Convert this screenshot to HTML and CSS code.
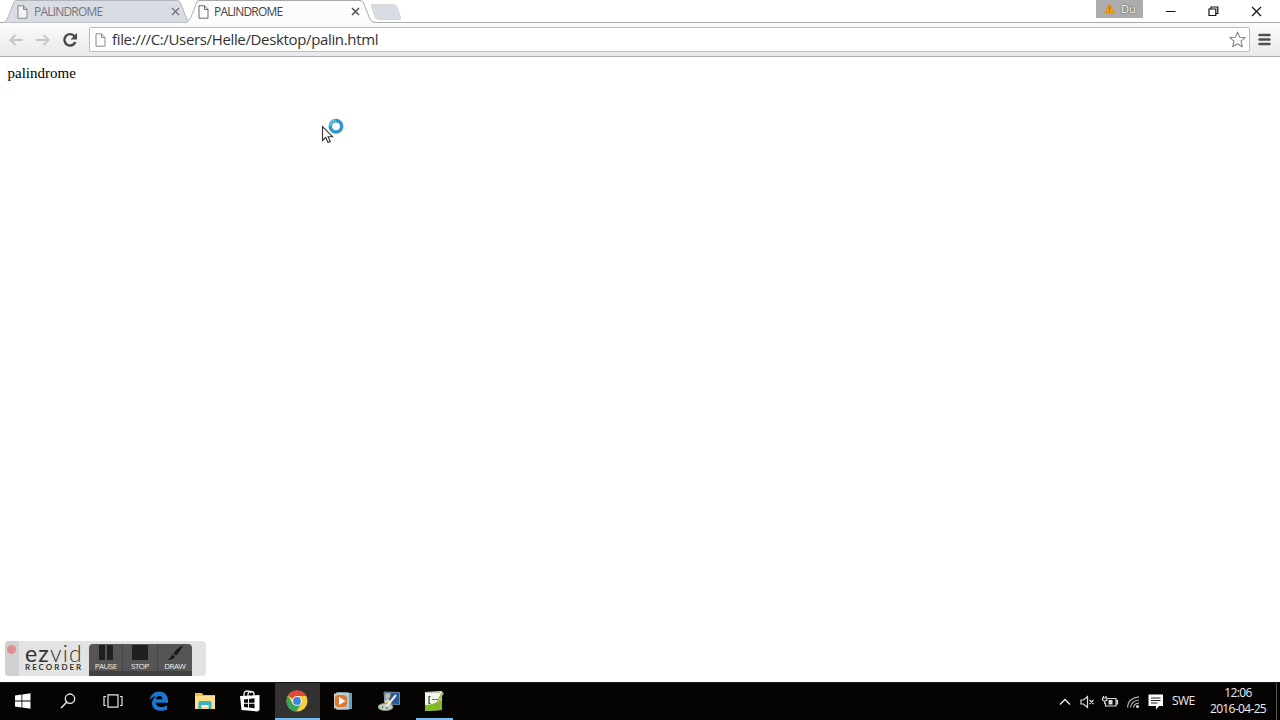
FILE: index.html
```html
<!DOCTYPE html>
<html lang="en">
<head>
    <meta charset="UTF-8">
    <meta name="viewport" content="width=device-width, initial-scale=1.0">
    <link rel="stylesheet" href="styles.css">
    <title>PALINDROME</title>
</head>
<body>
    <div class="desktop">
        <header class="tab-strip">
            <div class="tab">
                <svg class="tab-shape" width="192" height="24" viewBox="0 0 192 24">
                    <path d="M3 22.5 C7 22 8 17 14 1.5 Q15 .5 17 .5 H177 Q179 .5 180 2 L187 19 Q189 22.5 192 22.5" fill="#d9dce3" stroke="#b3b5ba"/>
                </svg>
                <svg class="page-icon" width="11" height="14" viewBox="0 0 11 14"><path d="M1 .8H6.5L10 4.5V13.2H1ZM6.5 .8V4.5H10" fill="#f4f4f6" stroke="#85878d"/></svg>
                <span class="tab-title">PALINDROME</span>
                <svg class="tab-close" width="9" height="9" viewBox="0 0 9 9"><path d="M1 1L8 8M8 1L1 8" stroke="#77797e" stroke-width="1.5"/></svg>
            </div>
            <div class="tab active">
                <svg class="tab-shape" width="190" height="24" viewBox="0 0 190 24">
                    <path d="M0 24 V22.5 C5 22 6 17 12 1.5 Q13 .5 15 .5 H175 Q177 .5 178 2 L185 19 Q187 22.5 190 22.5 V24Z" fill="#fcfcfc"/>
                    <path d="M0 22.5 C5 22 6 17 12 1.5 Q13 .5 15 .5 H175 Q177 .5 178 2 L185 19 Q187 22.5 190 22.5" fill="none" stroke="#a9a9a9"/>
                </svg>
                <svg class="page-icon" width="11" height="14" viewBox="0 0 11 14"><path d="M1 .8H6.5L10 4.5V13.2H1ZM6.5 .8V4.5H10" fill="#fff" stroke="#68696c"/></svg>
                <span class="tab-title">PALINDROME</span>
                <svg class="tab-close" width="9" height="9" viewBox="0 0 9 9"><path d="M1 1L8 8M8 1L1 8" stroke="#55565a" stroke-width="1.6"/></svg>
            </div>
            <svg class="new-tab" width="32" height="16" viewBox="0 0 32 16"><path d="M2 .5H24Q26 .5 27 3L30.500 13Q31 15.500 29 15.500H9Q6 15.500 5 13L1.500 3Q1 .5 2 .5Z" fill="#d9dce3" stroke="#d3d6dc"/></svg>
            <div class="window-buttons">
                <div class="profile">
                    <svg width="11" height="11" viewBox="0 0 11 11"><path d="M5.500 .8L10.300 10H.7Z" fill="#f0a11c" stroke="#d99222" stroke-linejoin="round"/><path d="M5.500 3.500V7M5.500 8V9" stroke="#8b6528" stroke-width="1.200"/></svg>
                    <span>Du</span>
                </div>
                <svg class="window-button" width="43" height="23" viewBox="0 0 43 23"><path d="M17 11.500H26.500" stroke="#111" stroke-width="1"/></svg>
                <svg class="window-button" width="43" height="23" viewBox="0 0 43 23"><path d="M17 9H23.800V15.500H17ZM19 9V7H25.800V13.500H23.800" fill="none" stroke="#111" stroke-width="1.200"/></svg>
                <svg class="window-button" width="43" height="23" viewBox="0 0 43 23"><path d="M17 7L26 16M26 7L17 16" stroke="#111" stroke-width="1.200"/></svg>
            </div>
        </header>

        <nav class="toolbar">
            <svg class="nav-icon" width="16" height="14" viewBox="0 0 16 14"><path d="M15 7H3M7.500 2L2.500 7L7.500 12" fill="none" stroke="#c6c6c6" stroke-width="2"/></svg>
            <svg class="nav-icon" width="16" height="14" viewBox="0 0 16 14"><path d="M1 7H13M8.500 2L13.500 7L8.500 12" fill="none" stroke="#c6c6c6" stroke-width="2"/></svg>
            <svg class="nav-icon" width="16" height="16" viewBox="0 0 16 16"><path d="M12.600 4.300A5.700 5.700 0 1 0 13.400 10" fill="none" stroke="#4a4a4a" stroke-width="2.400"/><path d="M15 1V7.500H8.500Z" fill="#4a4a4a"/></svg>
            <div class="address-bar">
                <svg width="11" height="14" viewBox="0 0 11 14"><path d="M1 .8H6.500L10 4.500V13.200H1ZM6.500 .8V4.500H10" fill="#fff" stroke="#8a8a8a"/></svg>
                <span class="url">file:///C:/Users/Helle/Desktop/palin.html</span>
                <svg width="17" height="17" viewBox="0 0 17 17"><path d="M8.500 1L10.700 6.200L16.200 6.600L12 10.200L13.300 15.800L8.500 12.800L3.700 15.800L5 10.200L.8 6.600L6.300 6.200Z" fill="#fff" stroke="#858585" stroke-width="1.100" stroke-linejoin="round"/></svg>
            </div>
            <svg class="menu-icon" width="13" height="13" viewBox="0 0 13 13"><path d="M1.500 2H11.500M1.500 6.500H11.500M1.500 11H11.500" stroke="#505050" stroke-width="2.400" stroke-linecap="round"/></svg>
        </nav>

        <main class="page">palindrome</main>

        <footer class="taskbar">
            <div class="task system"><svg width="16" height="16" viewBox="0 0 16 16"><path d="M0 2.500L6.500 1.600V7.600H0ZM7.300 1.500L15.500 .3V7.600H7.300ZM0 8.400H6.500V14.400L0 13.500ZM7.300 8.400H15.500V15.700L7.300 14.500Z" fill="#fff"/></svg></div>
            <div class="task system"><svg width="16" height="16" viewBox="0 0 16 16"><circle cx="10" cy="5.700" r="4.700" fill="none" stroke="#eee" stroke-width="1.300"/><path d="M6.700 9.200L1 15" stroke="#eee" stroke-width="1.400"/></svg></div>
            <div class="task system"><svg width="20" height="14" viewBox="0 0 20 14"><path d="M5 .8H15V13.200H5ZM3 2.500H1V11.500H3M17 2.500H19V11.500H17" fill="none" stroke="#e6e6e6" stroke-width="1.200"/></svg></div>
            <div class="task"><svg width="20" height="20" viewBox="0 0 20 20"><path d="M.8 9C1.500 3.500 5.500 .5 10.200 .5C16 .5 19 4.700 19 9.500V11.700H6.800C7 15 10 16 12.500 16C14.800 16 16.500 15.400 18 14.500V18.500C16.300 19.400 14.200 19.800 12 19.800C6.500 19.800 3 16.900 3 12.200C3 9 4.800 6.600 7.500 5.300C4.700 5.300 2.300 6.800 .8 9ZM7 8.300H13.500C13.500 6.200 12.400 5 10.400 5C8.500 5 7.300 6.300 7 8.300Z" fill="#1979d2"/></svg></div>
            <div class="task"><svg width="20" height="18" viewBox="0 0 20 18"><path d="M0 1H7L8.500 3H20V17H0Z" fill="#e9bf55"/><path d="M0 4H20V17H0Z" fill="#fbe08a"/><path d="M3.500 17V10.500Q3.500 9 5 9H15Q16.500 9 16.500 10.500V17H13.500V13H6.500V17Z" fill="#38b3c5"/><path d="M6.500 13H13.500V15H6.500Z" fill="#fff0b2"/></svg></div>
            <div class="task"><svg width="20" height="22" viewBox="0 0 20 22"><path d="M4 6V4Q4 1 7.500 1Q10 1 11 3M8 6V4Q8 1.500 11 1.500Q14 1.500 14 4V6" fill="none" stroke="#eee" stroke-width="1.300"/><path d="M0 6L19.500 5V20L17.500 21.500L1.500 20Z" fill="#fff"/><path d="M4 9.500L8 9V12.700H4ZM9 8.900L14.500 8.200V12.700H9ZM4 13.700H8V17.500L4 17ZM9 13.700H14.500V18.300L9 17.600Z" fill="#090909"/></svg></div>
            <div class="task current"><svg width="22" height="22" viewBox="0 0 22 22">
                <circle cx="11" cy="11" r="10.500" fill="#f7cf43"/>
                <path d="M11 11L1.900 5.700A10.500 10.500 0 0 1 20.300 6H11Z" fill="#df4936"/>
                <path d="M1.900 5.700A10.500 10.500 0 0 0 10.200 21.500L15.200 13.500L11 11L6.600 13.400Z" fill="#3ba45a"/>
                <circle cx="11" cy="11" r="5" fill="#f5f2e9"/><circle cx="11" cy="11" r="3.900" fill="#4284e4"/></svg></div>
            <div class="task"><svg width="20" height="20" viewBox="0 0 20 20"><path d="M5 1L19 2V18L5 19Z" fill="#64a2bd"/><path d="M3 1.500H16V18.500H3Z" fill="#a9cddb"/><path d="M1 2.500H14V17.500H1Z" fill="#d3c9bd"/><rect x="2" y="4" width="12" height="12" rx="3.500" fill="#dc7834"/><path d="M6 6L12.500 10L6 14Z" fill="#fff"/></svg></div>
            <div class="task"><svg width="22" height="20" viewBox="0 0 22 20"><path d="M6 1L21.500 1.500V13.500L7 13Z" fill="#285697" stroke="#8ba3bd" stroke-width=".8"/><path d="M7 2H13L10 11H6Z" fill="#82acd2"/><circle cx="10" cy="5" r="2.300" fill="#deb57c"/><path d="M6 14Q7 8 11 8L14 14Z" fill="#edcf91"/><ellipse cx="7.500" cy="16" rx="7.500" ry="3.500" fill="#c8d1bd" stroke="#7f9784"/><path d="M9 15L18 4" stroke="#f0eee0" stroke-width="2"/><circle cx="4.500" cy="16" r="1" fill="#3e896b"/><circle cx="9" cy="17" r="1" fill="#547ea5"/></svg></div>
            <div class="task open"><svg width="20" height="22" viewBox="0 0 20 22"><path d="M1 2L18 1V20L1 21Z" fill="#f3f7e9"/><path d="M1 15Q8 15 18 10V20L1 21Z" fill="#82bb24"/><path d="M2 2.500H17" stroke="#a0a4a0" stroke-dasharray="1.500 1"/><path d="M6.500 6.500H5V13.500H6.500M8.500 9.500H10.500M11.500 9.500H13.500" fill="none" stroke="#384d31" stroke-width="1.200"/><path d="M18.500 2L13.500 11L12.500 15L15 12.500L19.700 3Z" fill="#c6d759" stroke="#65802b" stroke-width=".6"/></svg></div>

            <div class="tray">
                <svg width="22" height="18" viewBox="0 0 22 18"><path d="M6 11.500L11 6.500L16 11.500" fill="none" stroke="#eee" stroke-width="1.400"/></svg>
                <svg width="22" height="18" viewBox="0 0 22 18"><path d="M4 7H6.500L10.500 3.500V14.500L6.500 11H4ZM12.500 7L16.500 11M16.500 7L12.500 11" fill="none" stroke="#ddd" stroke-width="1.200"/></svg>
                <svg width="22" height="18" viewBox="0 0 22 18"><path d="M9 5.500H17V13H6.500V10M17 7.500H18.500V11H17" fill="none" stroke="#ddd" stroke-width="1.200"/><path d="M9.500 7H13.500V11.500H9.500Z" fill="#ddd"/><path d="M4.500 3V5M7 3V5M3.500 5H8V6.500Q8 8 5.700 8Q3.500 8 3.500 6.500ZM5.700 8V11" fill="none" stroke="#ddd" stroke-width="1.200"/></svg>
                <svg width="22" height="18" viewBox="0 0 22 18"><path d="M5.500 14.500Q6 5 17 3.800M8.500 14.500Q9 8 17 7M11.500 14.500Q12 10.500 17 10" fill="none" stroke="#bbb" stroke-width="1.200"/><circle cx="15.500" cy="13.500" r="1.500" fill="#ddd"/></svg>
                <svg width="22" height="18" viewBox="0 0 22 18"><path d="M3.500 1.500H18V13H14L11 16.500V13H3.500Z" fill="#fff"/><path d="M6 5H15.500M6 7.500H15.500M6 10H12.500" stroke="#222" stroke-width="1"/></svg>
                <span class="language">SWE</span>
                <div class="clock"><span>12:06</span><span class="date">2016-04-25</span></div>
            </div>
        </footer>

        <div class="recorder">
            <div class="recorder-grip"></div>
            <div class="recorder-logo">
                <div class="recorder-name"><b>ez</b>vid</div>
                <div class="recorder-label">RECORDER</div>
            </div>
            <div class="recorder-controls">
                <div class="control"><svg width="34" height="17" viewBox="0 0 34 17"><path d="M10 1H16V16H10ZM18 1H24V16H18Z" fill="#202020"/></svg><span>PAUSE</span></div>
                <div class="control"><svg width="34" height="17" viewBox="0 0 34 17"><path d="M9 1H25V16H9Z" fill="#1f1f1f"/></svg><span>STOP</span></div>
                <div class="control"><svg width="34" height="17" viewBox="0 0 34 17"><path d="M25 1Q18 5 15.500 9.500L18 11.500Q22 8 25 1ZM14.500 10.500L17 12.500Q15 16 9 16Q13 14 14.500 10.500Z" fill="#181818"/></svg><span>DRAW</span></div>
            </div>
        </div>

        <svg class="cursor" width="24" height="28" viewBox="0 0 24 28">
            <path d="M1.500 8.500V22.500L4.700 19.500L7 24.500L9.300 23.500L7 18.700H11.500Z" fill="#fff" stroke="#333" stroke-width="1.100"/>
            <circle cx="15" cy="8.300" r="5.700" fill="#fff" stroke="#3298cb" stroke-width="3.600"/>
            <path d="M9.300 8A5.700 5.700 0 0 1 14.700 2.600" fill="none" stroke="#62b8df" stroke-width="3"/>
        </svg>
    </div>
</body>
</html>
```
FILE: styles.css
```css
* {
    box-sizing: border-box;
}

body {
    margin: 0;
    overflow: hidden;
    font-family: "Open Sans", "Noto Sans", sans-serif;
    background-color: #fff;
}

svg {
    display: block;
    flex-shrink: 0;
}

.desktop {
    position: relative;
    display: flex;
    flex-direction: column;
    width: 1280px;
    height: 720px;
}

.tab-strip {
    display: flex;
    height: 23px;
    background: linear-gradient(#fff 22px, #aaa 22px);
}

.tab {
    position: relative;
    display: flex;
    align-items: center;
    width: 192px;
    padding: 0 12px 0 17px;
    color: #75777d;
}

.tab.active {
    z-index: 1;
    width: 190px;
    margin-left: -7px;
    padding-right: 15px;
    padding-left: 13px;
    color: #444;
}

.tab-shape {
    position: absolute;
    top: 0;
    left: 0;
}

.page-icon,
.tab-title,
.tab-close {
    position: relative;
}

.tab-title {
    margin-left: 6px;
    font-size: 12px;
    letter-spacing: -0.8px;
}

.active .tab-title {
    margin-left: 5px;
}

.tab-close {
    margin-left: auto;
}

.new-tab {
    margin-top: 4px;
    margin-left: -5px;
}

.window-buttons {
    display: flex;
    margin-left: auto;
    padding-right: 2px;
}

.profile {
    display: flex;
    align-items: center;
    gap: 6px;
    width: 47px;
    height: 18px;
    margin-right: 6px;
    padding: 0 0 2px 8px;
    background-color: #adadad;
    color: #f5f5f5;
    font-size: 11px;
    text-shadow: 0 0 2px #333;
}

.toolbar {
    display: flex;
    align-items: center;
    height: 34px;
    padding: 0 9px 0 8px;
    background: linear-gradient(#fbfbfb, #e9e9e9);
    border-bottom: 1px solid #acacac;
}

.nav-icon {
    margin-right: 11px;
}

.address-bar {
    display: flex;
    flex: 1;
    align-items: center;
    height: 25px;
    margin-right: 8px;
    padding: 0 3px 0 5px;
    border: 1px solid #bbb;
    border-radius: 2px;
    background-color: #fff;
}

.url {
    flex: 1;
    margin-left: 6px;
    padding-bottom: 2px;
    color: #333;
    font-size: 15px;
    letter-spacing: -0.35px;
}

.page {
    flex: 1;
    padding: 8px 7.5px;
    font-family: "Liberation Serif", serif;
    font-size: 15px;
}

.taskbar {
    display: flex;
    height: 38px;
    background-color: #060303;
    border-top: 1px solid #171515;
    color: #eee;
}

.task {
    display: flex;
    align-items: center;
    justify-content: center;
    width: 45.8px;
    padding-bottom: 1px;
}

.task.system {
    width: 45.3px;
}

.task.current {
    width: 45px;
    margin-left: 1.7px;
    background-color: #333231;
    box-shadow: inset 0 -2px #76b9ed;
}

.task.open {
    width: 37px;
    margin-left: 4px;
    box-shadow: inset 0 -2px #76b9ed;
}

.tray {
    display: flex;
    align-items: center;
    gap: 0.7px;
    margin-left: auto;
    padding-right: 3px;
}

.language {
    width: 32px;
    padding-bottom: 2px;
    font-size: 12px;
    letter-spacing: -0.6px;
    text-align: center;
}

.clock {
    display: flex;
    flex-direction: column;
    align-items: center;
    justify-content: center;
    width: 77px;
    height: 37px;
    padding-bottom: 2px;
    border-right: 1px solid #555;
    font-size: 12px;
    line-height: 16px;
    letter-spacing: -0.65px;
}

/* recording bar floats over the page */
.recorder {
    position: absolute;
    top: 641px;
    left: 5px;
    display: flex;
    width: 201px;
    height: 35px;
    border-radius: 4px;
    background-color: #e3e3e3;
}

.recorder-grip {
    width: 14px;
    padding: 4px 0 0 2px;
    border-radius: 4px 0 0 4px;
    background-color: #d1d1d1;
}

.recorder-grip::before {
    content: "";
    display: block;
    width: 9px;
    height: 9px;
    border-radius: 50%;
    background-color: #df9090;
}

.recorder-logo {
    width: 70px;
    padding-left: 6px;
    color: #333;
    font-family: Lato, sans-serif;
}

.recorder-name {
    font-size: 23px;
    font-weight: 300;
    line-height: 28px;
    margin-top: -2px;
    letter-spacing: 1.2px;
}

.recorder-name b {
    font-weight: 400;
}

.recorder-label {
    margin-top: -5px;
    font-size: 8px;
    font-weight: 700;
    line-height: 10px;
    letter-spacing: 2px;
}

.recorder-controls {
    display: flex;
    margin-top: 3px;
    border-radius: 4px 4px 0 0;
    background: linear-gradient(#555 27px, #414141 27px);
}

.control {
    width: 34.3px;
    border-right: 1px solid #444;
    color: #eee;
    font-size: 8px;
    line-height: 9px;
    letter-spacing: -0.5px;
    text-align: center;
}

.control span {
    display: block;
}

.control:last-child {
    border-right: none;
}

.cursor {
    position: absolute;
    top: 118px;
    left: 321px;
}
```
